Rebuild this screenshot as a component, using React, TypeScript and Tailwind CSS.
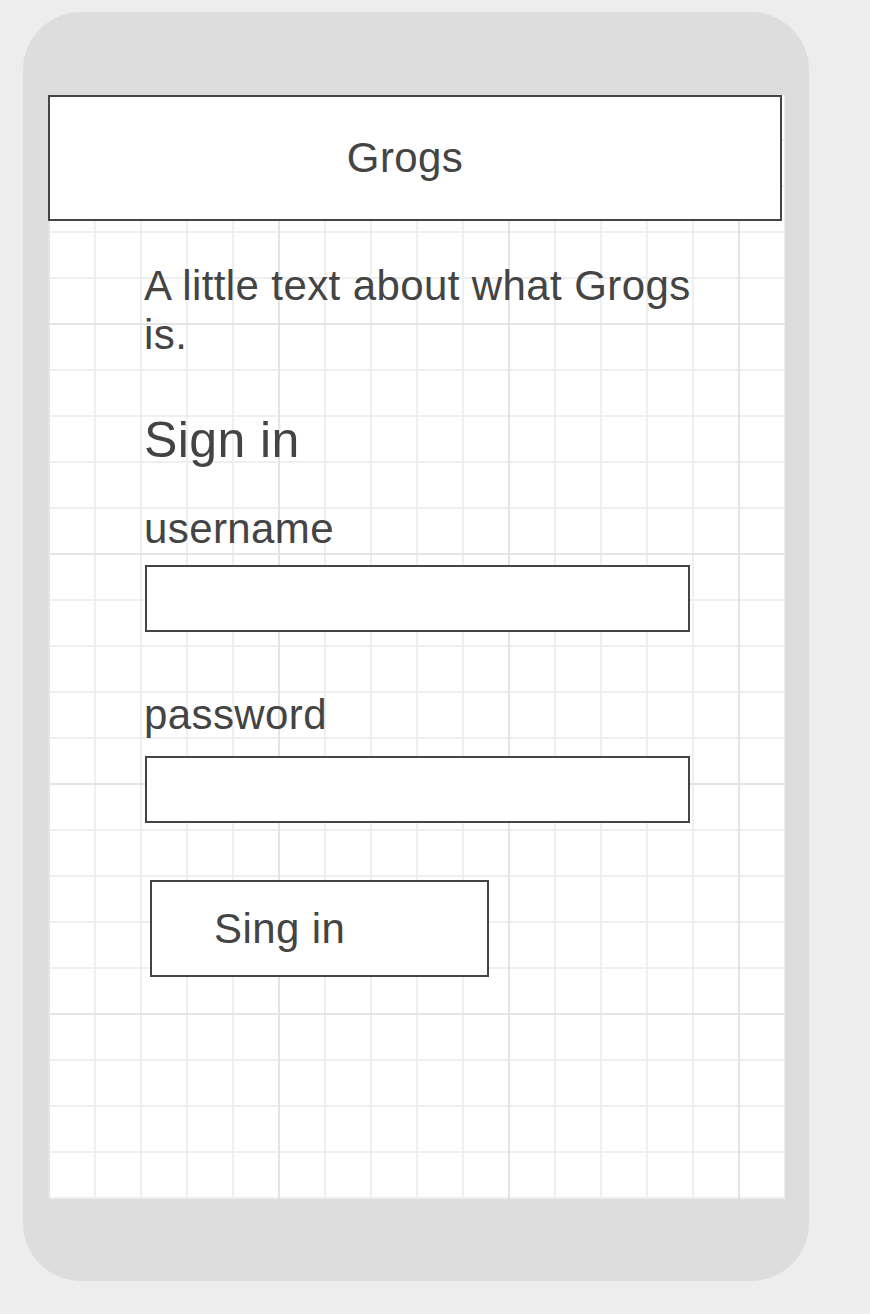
export default function App() {
  return (
    <div className="min-h-screen bg-[#ededed] pl-[23px] pt-[12px] font-['Liberation_Sans',Arial,sans-serif] tracking-[0.4px] text-[#444444]">
      {/* Phone frame */}
      <div className="w-[786px] h-[1269px] rounded-[58px] bg-[#dddddd] pl-[25px] pt-[83px]">
        {/* Screen with wireframe grid */}
        <div className="w-[737px] h-[1104px] bg-white bg-[image:linear-gradient(to_right,#e4e4e4_2px,transparent_2px),linear-gradient(to_bottom,transparent_228px,#e4e4e4_228px),linear-gradient(to_right,#efefef_2px,transparent_2px),linear-gradient(to_bottom,transparent_44px,#efefef_44px)] bg-[length:230px_230px,230px_230px,46px_46px,46px_46px]">
          {/* Top bar */}
          <div className="w-[734px] h-[126px] border-2 border-[#444444] bg-white flex items-center justify-center pr-[20px]">
            <span className="text-[42px] leading-[50px]">Grogs</span>
          </div>

          {/* Sign in form */}
          <div className="pl-[96px]">
            <p className="mt-[40px] w-[570px] text-[42px] leading-[49px]">
              A little text about what Grogs is.
            </p>
            <h1 className="mt-[52px] text-[50px] leading-[58px]">Sign in</h1>

            <label htmlFor="username" className="block mt-[35px] text-[42px] leading-[50px]">
              username
            </label>
            <input
              id="username"
              type="text"
              className="block mt-[11px] ml-[1px] w-[545px] h-[67px] border-2 border-[#444444] bg-white outline-none"
            />

            <label htmlFor="password" className="block mt-[58px] text-[42px] leading-[50px]">
              password
            </label>
            <input
              id="password"
              type="password"
              className="block mt-[16px] ml-[1px] w-[545px] h-[67px] border-2 border-[#444444] bg-white outline-none"
            />

            <button className="mt-[57px] ml-[6px] w-[339px] h-[97px] border-2 border-[#444444] bg-white flex items-center pl-[62px] text-[42px] leading-[50px]">
              Sing in
            </button>
          </div>
        </div>
      </div>
    </div>
  );
}
